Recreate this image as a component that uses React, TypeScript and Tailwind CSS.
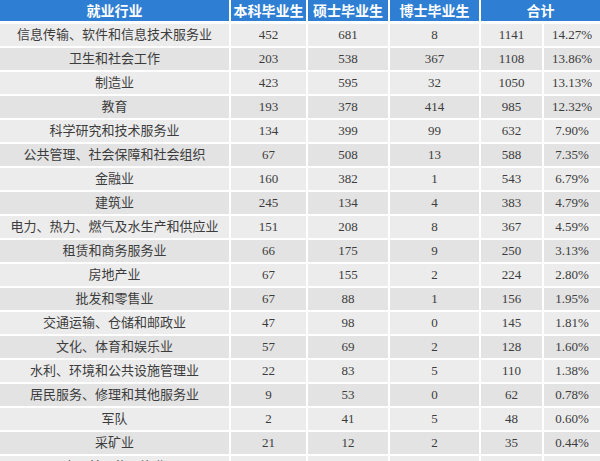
import React from 'react';

type Row = [string, string, string, string, string, string];

const rows: Row[] = [
  ['信息传输、软件和信息技术服务业', '452', '681', '8', '1141', '14.27%'],
  ['卫生和社会工作', '203', '538', '367', '1108', '13.86%'],
  ['制造业', '423', '595', '32', '1050', '13.13%'],
  ['教育', '193', '378', '414', '985', '12.32%'],
  ['科学研究和技术服务业', '134', '399', '99', '632', '7.90%'],
  ['公共管理、社会保障和社会组织', '67', '508', '13', '588', '7.35%'],
  ['金融业', '160', '382', '1', '543', '6.79%'],
  ['建筑业', '245', '134', '4', '383', '4.79%'],
  ['电力、热力、燃气及水生产和供应业', '151', '208', '8', '367', '4.59%'],
  ['租赁和商务服务业', '66', '175', '9', '250', '3.13%'],
  ['房地产业', '67', '155', '2', '224', '2.80%'],
  ['批发和零售业', '67', '88', '1', '156', '1.95%'],
  ['交通运输、仓储和邮政业', '47', '98', '0', '145', '1.81%'],
  ['文化、体育和娱乐业', '57', '69', '2', '128', '1.60%'],
  ['水利、环境和公共设施管理业', '22', '83', '5', '110', '1.38%'],
  ['居民服务、修理和其他服务业', '9', '53', '0', '62', '0.78%'],
  ['军队', '2', '41', '5', '48', '0.60%'],
  ['采矿业', '21', '12', '2', '35', '0.44%'],
  ['农、林、牧、渔业', '10', '14', '1', '25', '0.31%'],
];

const head =
  "h-[21px] bg-[#2e7ed3] text-white font-bold text-[14px] flex items-center justify-center font-['Noto_Sans_CJK_SC','Noto_Sans',sans-serif]";

export default function App() {
  return (
    <div className="w-[600px] h-[461px] overflow-hidden bg-white">
      <div className="grid grid-cols-[229px_75px_80px_89px_61px_1fr] gap-[2px] auto-rows-[22px]">
        {/* 表头 */}
        <div className={head}>就业行业</div>
        <div className={head}>本科毕业生</div>
        <div className={head}>硕士毕业生</div>
        <div className={head}>博士毕业生</div>
        <div className={`col-span-2 ${head}`}>合计</div>

        {rows.map((r, i) =>
          r.map((c, j) => (
            <div
              key={`${i}-${j}`}
              className={`flex items-center justify-center text-[13px] text-[#3c3c3c] font-['Liberation_Serif','Noto_Sans_CJK_SC',serif] ${
                i % 2 === 0 ? 'bg-[#ececec]' : 'bg-[#e3e3e3]'
              }`}
            >
              {c}
            </div>
          ))
        )}
      </div>
    </div>
  );
}
